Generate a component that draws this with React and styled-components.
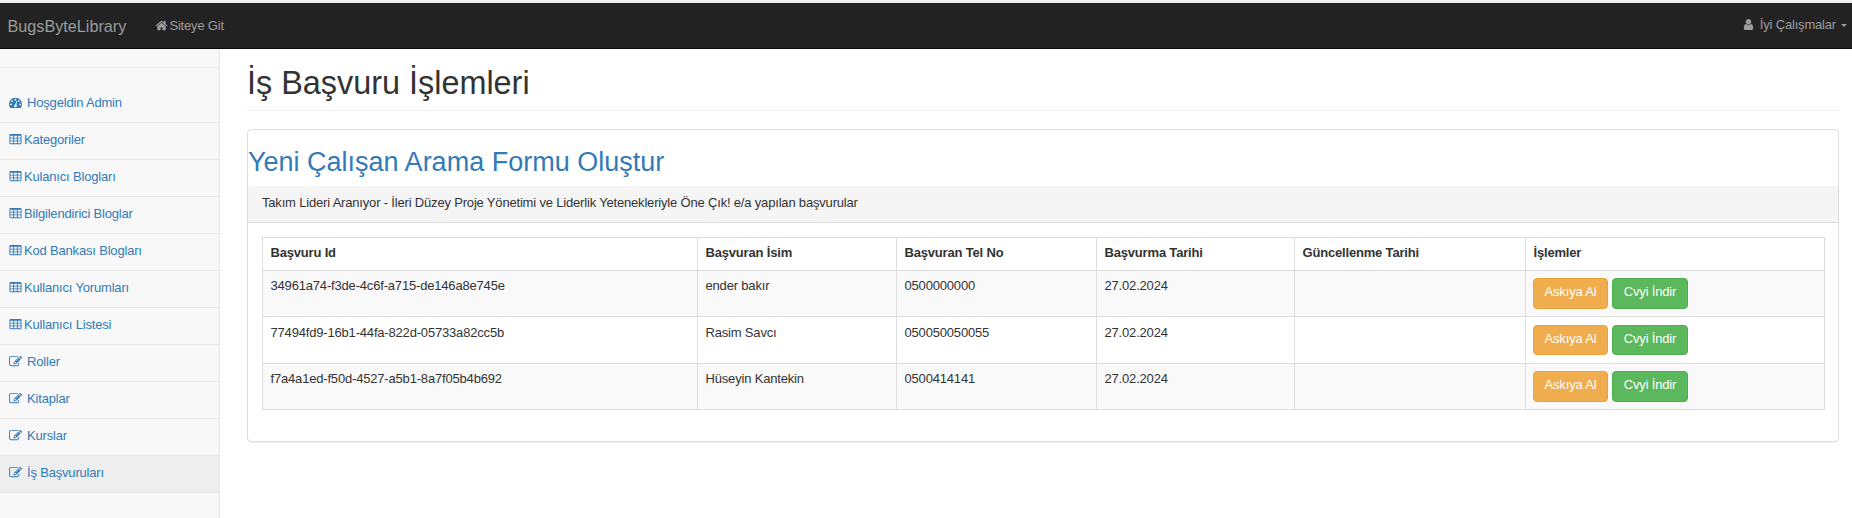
import React from "react";
import styled, { createGlobalStyle } from "styled-components";

const GlobalStyle = createGlobalStyle`
  *, *::before, *::after { box-sizing: border-box; }
  body {
    margin: 0;
    background: #f8f8f8;
    color: #333;
    font: 13px/18px "Liberation Sans", Arial, sans-serif;
    letter-spacing: -0.18px;
  }
`;

const ICONS = {
  home: "M1472 992v480q0 26-19 45t-45 19h-384v-384h-256v384h-384q-26 0-45-19t-19-45v-480q0-1 .5-3t.5-3l575-474 575 474q1 2 1 6zm223-69l-62 74q-8 9-21 11h-3q-13 0-21-7l-692-577-692 577q-12 8-24 7-13-2-21-11l-62-74q-8-10-7-23.5t11-21.5l719-599q32-26 76-26t76 26l244 204v-195q0-14 9-23t23-9h192q14 0 23 9t9 23v408l219 182q10 8 11 21.5t-7 23.5z",
  user: "M1536 1399q0 109-62.5 187t-150.5 78h-854q-88 0-150.5-78t-62.5-187q0-85 8.5-160.5t31.5-152 58.5-131 94-89 134.5-34.5q131 128 313 128t313-128q76 0 134.5 34.5t94 89 58.5 131 31.5 152 8.5 160.5zm-256-887q0 159-112.5 271.5t-271.5 112.5-271.5-112.5-112.5-271.5 112.5-271.5 271.5-112.5 271.5 112.5 112.5 271.5z",
  edit: "M888 1184l116-116-152-152-116 116v56h96v96h56zm440-720q-16-16-33 1l-350 350q-17 17-1 33t33-1l350-350q17-17 1-33zm80 594v190q0 119-84.5 203.5t-203.5 84.5h-832q-119 0-203.5-84.5t-84.5-203.5v-832q0-119 84.5-203.5t203.5-84.5h832q63 0 117 25 15 7 18 23 3 17-9 29l-49 49q-14 14-32 8-23-6-45-6h-832q-66 0-113 47t-47 113v832q0 66 47 113t113 47h832q66 0 113-47t47-113v-126q0-13 9-22l64-64q15-15 35-7t20 29zm-96-738l288 288-672 672h-288v-288zm444 132l-92 92-288-288 92-92q28-28 68-28t68 28l152 152q28 28 28 68t-28 68z",
  dashboard: "M384 1152q0-53-37.5-90.5t-90.5-37.5-90.5 37.5-37.5 90.5 37.5 90.5 90.5 37.5 90.5-37.5 37.5-90.5zm192-448q0-53-37.5-90.5t-90.5-37.5-90.5 37.5-37.5 90.5 37.5 90.5 90.5 37.5 90.5-37.5 37.5-90.5zm428 481l101-382q6-26-7.5-48.5t-38.5-29.5-48 6.5-30 39.5l-101 382q-60 5-107 43.5t-63 98.5q-20 77 20 146t117 89 146-20 89-117q16-60-6-117t-72-91zm660-33q0-53-37.5-90.5t-90.5-37.5-90.5 37.5-37.5 90.5 37.5 90.5 90.5 37.5 90.5-37.5 37.5-90.5zm-640-640q0-53-37.5-90.5t-90.5-37.5-90.5 37.5-37.5 90.5 37.5 90.5 90.5 37.5 90.5-37.5 37.5-90.5zm448 192q0-53-37.5-90.5t-90.5-37.5-90.5 37.5-37.5 90.5 37.5 90.5 90.5 37.5 90.5-37.5 37.5-90.5zm320 448q0 261-141 483-19 29-54 29h-1402q-35 0-54-29-141-221-141-483 0-182 71-348t191-286 286-191 348-71 348 71 286 191 191 286 71 348z",
  table: "M224 128h1344q66 0 113 47t47 113v1088q0 66-47 113t-113 47h-1344q-66 0-113-47t-47-113v-1088q0-66 47-113t113-47zM192 384h384v256h-384zM704 384h384v256h-384zM1216 384h384v256h-384zM192 768h384v256h-384zM704 768h384v256h-384zM1216 768h384v256h-384zM192 1152h384v256h-384zM704 1152h384v256h-384zM1216 1152h384v256h-384z",
};

const Glyph = styled.svg`
  flex: none;
  width: 13px;
  height: 13px;
  margin-bottom: 1px;
  fill: currentColor;
`;

const Icon = ({ name }) => (
  <Glyph viewBox="0 0 1792 1792">
    <path fillRule={name === "table" ? "evenodd" : "nonzero"} d={ICONS[name]} />
  </Glyph>
);

const Page = styled.div`
  display: flex;
  flex-direction: column;
  height: 518px;
  border-top: 3px solid #f0f0f0;
  overflow: hidden;
`;

const Navbar = styled.nav`
  display: flex;
  align-items: center;
  flex: none;
  height: 46px;
  padding: 0 5px 0 7.5px;
  background: #222;
  border-bottom: 1px solid #080808;
  color: #9d9d9d;
`;

const Brand = styled.a`
  width: 147.5px;
  font-size: 16.2px;
  letter-spacing: 0;
`;

const NavLink = styled.a`
  display: flex;
  align-items: center;
  gap: ${(p) => p.$gap || 1.4}px;
  margin-left: ${(p) => (p.$right ? "auto" : 0)};
  padding-bottom: ${(p) => (p.$right ? 2 : 0)}px;
`;

const Caret = styled.span`
  margin-top: 2px;
  border-top: 3px solid;
  border-left: 3px solid transparent;
  border-right: 3px solid transparent;
`;

const Columns = styled.div`
  display: flex;
  flex: 1;
  min-height: 0;
`;

const Sidebar = styled.ul`
  flex: none;
  width: 220px;
  margin: 0;
  padding: 0;
  list-style: none;
  border-right: 1px solid #e7e7e7;
`;

const SidebarTop = styled.li`
  height: 19px;
  margin-bottom: 18px;
  border-bottom: 1px solid #eee;
`;

const SidebarItem = styled.li`
  display: flex;
  align-items: center;
  gap: ${(p) => (p.$wide ? 5 : 2)}px;
  height: 37px;
  padding: 0 9px 2px;
  border-bottom: 1px solid #e7e7e7;
  background: ${(p) => (p.$active ? "#eee" : "transparent")};
  color: #337ab7;
`;

const Main = styled.main`
  flex: 1;
  padding: 0 13px 0 27px;
  background: #fff;
`;

const Content = styled.div`
  width: 1592px;
`;

const PageTitle = styled.h1`
  height: 62px;
  margin: 0 0 18px;
  padding-top: 16px;
  border-bottom: 1px solid #eee;
  font-size: 32.4px;
  font-weight: 400;
  line-height: 36px;
  letter-spacing: 0;
`;

const Panel = styled.section`
  height: 313px;
  border: 1px solid #ddd;
  border-radius: 4px;
  box-shadow: 0 1px 1px rgba(0, 0, 0, 0.05);
`;

const PanelTitle = styled.h2`
  height: 56px;
  margin: 0;
  padding-top: 17px;
  color: #337ab7;
  font-size: 27px;
  font-weight: 400;
  line-height: 30px;
  letter-spacing: 0;
`;

const PanelHeading = styled.div`
  height: 37px;
  padding: 8px 14px;
  background: #f5f5f5;
  border-bottom: 1px solid #ddd;
  border-radius: 3px 3px 0 0;
`;

const PanelBody = styled.div`
  padding: 14px;
`;

const Table = styled.table`
  width: 1563px;
  table-layout: fixed;
  border-collapse: collapse;
`;

const Column = styled.col`
  width: ${(p) => p.$width}px;
`;

const HeadCell = styled.th`
  height: 33px;
  padding: 6px 7.5px;
  border: 1px solid #ddd;
  text-align: left;
  vertical-align: top;
`;

const Row = styled.tr`
  height: ${(p) => p.$height}px;
  background: ${(p) => (p.$striped ? "#f9f9f9" : "#fff")};
`;

const Cell = styled.td`
  padding: ${(p) => (p.$low ? 7 : 6)}px 7px 0 ${(p) => (p.$actions ? 7 : 7.5)}px;
  border: 1px solid #ddd;
  vertical-align: top;
`;

const Actions = styled.div`
  display: flex;
  gap: 4px;
  padding-top: 1px;
`;

const Button = styled.button`
  width: ${(p) => (p.$success ? 76 : 75)}px;
  height: ${(p) => p.$height}px;
  padding: 0 0 3px;
  border: 1px solid ${(p) => (p.$success ? "#4cae4c" : "#eea236")};
  border-radius: 4px;
  background: ${(p) => (p.$success ? "#5cb85c" : "#f0ad4e")};
  color: #fff;
  font: inherit;
  letter-spacing: inherit;
`;

const MENU = [
  ["dashboard", "Hoşgeldin Admin"],
  ["table", "Kategoriler"],
  ["table", "Kulanıcı Blogları"],
  ["table", "Bilgilendirici Bloglar"],
  ["table", "Kod Bankası Blogları"],
  ["table", "Kullanıcı Yorumları"],
  ["table", "Kullanıcı Listesi"],
  ["edit", "Roller"],
  ["edit", "Kitaplar"],
  ["edit", "Kurslar"],
  ["edit", "İş Başvuruları"],
];

const COLUMNS = [
  ["Başvuru Id", 435],
  ["Başvuran İsim", 199],
  ["Başvuran Tel No", 200],
  ["Başvurma Tarihi", 198],
  ["Güncellenme Tarihi", 231],
  ["İşlemler", 299],
];

const APPLICATIONS = [
  ["34961a74-f3de-4c6f-a715-de146a8e745e", "ender bakır", "0500000000", "27.02.2024", ""],
  ["77494fd9-16b1-44fa-822d-05733a82cc5b", "Rasim Savcı", "050050050055", "27.02.2024", ""],
  ["f7a4a1ed-f50d-4527-a5b1-8a7f05b4b692", "Hüseyin Kantekin", "0500414141", "27.02.2024", ""],
];

export default function App() {
  return (
    <Page>
      <GlobalStyle />
      <Navbar>
        <Brand>BugsByteLibrary</Brand>
        <NavLink>
          <Icon name="home" />
          Siteye Git
        </NavLink>
        <NavLink $right $gap={5}>
          <Icon name="user" />
          İyi Çalışmalar
          <Caret />
        </NavLink>
      </Navbar>
      <Columns>
        <Sidebar>
          <SidebarTop />
          {MENU.map(([icon, label], i) => (
            <SidebarItem key={label} $wide={icon !== "table"} $active={i === MENU.length - 1}>
              <Icon name={icon} />
              {label}
            </SidebarItem>
          ))}
        </Sidebar>
        <Main>
          <Content>
            <PageTitle>İş Başvuru İşlemleri</PageTitle>
            <Panel>
              <PanelTitle>Yeni Çalışan Arama Formu Oluştur</PanelTitle>
              <PanelHeading>
                Takım Lideri Aranıyor - İleri Düzey Proje Yönetimi ve Liderlik Yetenekleriyle Öne Çık! e/a yapılan başvurular
              </PanelHeading>
              <PanelBody>
                <Table>
                  <colgroup>
                    {COLUMNS.map(([label, width]) => (
                      <Column key={label} $width={width} />
                    ))}
                  </colgroup>
                  <thead>
                    <tr>
                      {COLUMNS.map(([label]) => (
                        <HeadCell key={label}>{label}</HeadCell>
                      ))}
                    </tr>
                  </thead>
                  <tbody>
                    {APPLICATIONS.map((cells, r) => (
                      <Row key={cells[0]} $striped={r % 2 === 0} $height={r === 1 ? 47 : 46}>
                        {cells.map((text, c) => (
                          <Cell key={c} $low={r === 1}>{text}</Cell>
                        ))}
                        <Cell $actions $low={r === 1}>
                          <Actions>
                            <Button $height={r === 1 ? 30 : 31}>Askıya Al</Button>
                            <Button $success $height={r === 1 ? 30 : 31}>Cvyi İndir</Button>
                          </Actions>
                        </Cell>
                      </Row>
                    ))}
                  </tbody>
                </Table>
              </PanelBody>
            </Panel>
          </Content>
        </Main>
      </Columns>
    </Page>
  );
}
